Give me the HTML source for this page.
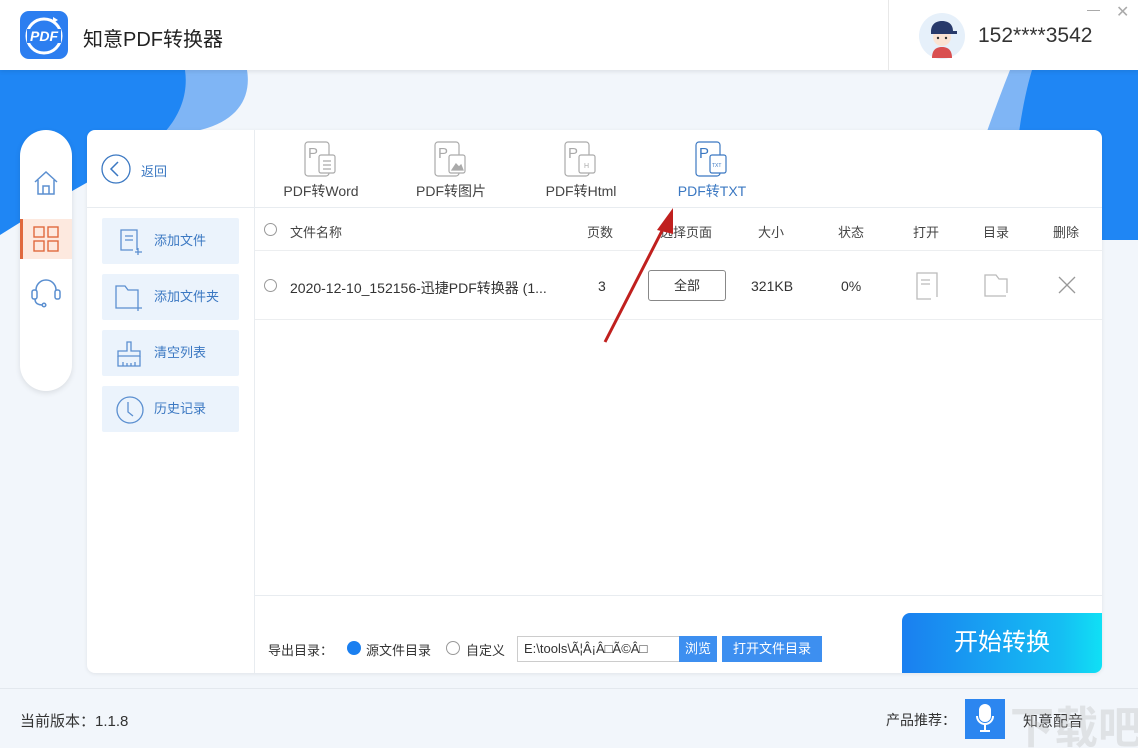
<!DOCTYPE html>
<html><head><meta charset="utf-8"><style>
*{margin:0;padding:0;box-sizing:border-box}
html,body{width:1138px;height:748px;overflow:hidden}
body{position:relative;background:#f2f6fb;font-family:"Liberation Sans","Noto Sans CJK SC",sans-serif;color:#333}
.a{position:absolute}
.hdr{left:0;top:0;width:1138px;height:70px;background:#fff;box-shadow:0 2px 4px rgba(0,0,0,.08);z-index:5}
.card{left:87px;top:130px;width:1015px;height:543px;background:#fff;border-radius:8px;box-shadow:0 1px 4px rgba(0,0,0,.08);overflow:hidden}
.side{left:20px;top:130px;width:52px;height:261px;background:#fff;border-radius:26px;box-shadow:0 2px 6px rgba(0,0,0,.1)}
.btn{left:15px;width:137px;height:46px;background:#ebf3fc;border-radius:2px;font-size:13px;color:#3b78c2;line-height:46px;padding-left:52px}
.tab{top:10px;width:120px;text-align:center;font-size:14px;color:#444}
.th{top:92px;font-size:13px;color:#444}
.td{top:148px;font-size:14px;color:#333}
</style></head><body>
<svg class="a" style="left:0;top:70px" width="1138" height="200">
<path d="M0 0H247C252 30 235 55 190 62C150 68 100 80 60 100L0 130Z" fill="#7fb5f5"/>
<path d="M0 0H185C190 35 170 70 120 95C80 115 40 140 0 165Z" fill="#1f86f4"/>
<path d="M1138 0V170H950C970 110 990 50 1010 0Z" fill="#7fb5f5"/>
<path d="M1138 0V170H1012C1012 100 1020 40 1032 0Z" fill="#1f86f4"/>
</svg>
<div class="a hdr">
 <svg class="a" style="left:20px;top:11px" width="48" height="48"><rect width="48" height="48" rx="9" fill="#2c7ef0"/><circle cx="24" cy="25" r="17" fill="none" stroke="#fff" stroke-width="3"/><rect x="7" y="18" width="34" height="14" fill="#2c7ef0"/><text x="24" y="30" font-size="14" font-weight="bold" font-style="italic" fill="#fff" text-anchor="middle" font-family="Liberation Sans">PDF</text><path d="M33 6l5 3-5 3z" fill="#fff"/></svg>
 <div class="a" style="left:83px;top:23px;font-size:20px;color:#222">知意PDF转换器</div>
 <div class="a" style="left:888px;top:0;width:1px;height:70px;background:#e8e8e8"></div>
 <svg class="a" style="left:918px;top:12px" width="48" height="48"><circle cx="24" cy="24" r="23" fill="#e6f0fa"/><path d="M14 46c0-8 4-11 10-11s10 3 10 11z" fill="#d94f50"/><circle cx="24" cy="25" r="9" fill="#fbe3d3"/><path d="M13 20c0-8 5-11 11-11s11 3 11 10h4v3H13z" fill="#283a6b"/><circle cx="20" cy="26" r="1.2" fill="#333"/><circle cx="28" cy="26" r="1.2" fill="#333"/></svg>
 <div class="a" style="left:978px;top:24px;font-size:21px;color:#333">152****3542</div>
 <div class="a" style="left:1087px;top:10px;width:13px;height:1px;background:#aaa"></div>
 <div class="a" style="left:1116px;top:2px;font-size:16px;color:#aaa">✕</div>
</div>
<div class="a side">
 <svg class="a" style="left:13px;top:40px" width="26" height="26"><path d="M2 12L13 2l11 10M5 10v14h16V10M10 24v-8h6v8" fill="none" stroke="#5b8fd0" stroke-width="1.5"/></svg>
 <div class="a" style="left:0;top:89px;width:52px;height:40px;background:#fde9df"></div>
 <div class="a" style="left:0;top:89px;width:3px;height:40px;background:#e0693e"></div>
 <svg class="a" style="left:13px;top:96px" width="26" height="26" fill="none" stroke="#e0693e" stroke-width="1.4"><rect x="1" y="1" width="10" height="10"/><rect x="15" y="1" width="10" height="10"/><rect x="1" y="15" width="10" height="10"/><rect x="15" y="15" width="10" height="10"/></svg>
 <svg class="a" style="left:10px;top:146px" width="32" height="32" fill="none" stroke="#5b8fd0" stroke-width="1.5"><path d="M6 14a10 10 0 0 1 20 0"/><rect x="2" y="14" width="5" height="9" rx="2"/><rect x="25" y="14" width="5" height="9" rx="2"/><path d="M5 23c0 4 3 6 8 6"/><circle cx="14" cy="29" r="1.8"/></svg>
</div>
<div class="a card">
 <div class="a" style="left:167px;top:0;width:1px;height:543px;background:#e8ecf0"></div>
 <div class="a" style="left:0;top:77px;width:1015px;height:1px;background:#e8ecf0"></div>
 <svg class="a" style="left:14px;top:24px" width="30" height="30"><circle cx="15" cy="15" r="14" fill="none" stroke="#3b78c2" stroke-width="1.3"/><path d="M17 8l-7 7 7 7" fill="none" stroke="#3b78c2" stroke-width="1.5"/></svg>
 <div class="a" style="left:54px;top:31px;font-size:13px;color:#3b78c2">返回</div>
 <div class="a btn" style="top:88px">添加文件<svg class="a" style="left:16px;top:10px" width="26" height="28" fill="none" stroke="#5b8fd0" stroke-width="1.3"><path d="M19 22V2H3v20h12"/><path d="M7 8h8M7 12h8M20 20v7M17 24h7"/></svg></div>
 <div class="a btn" style="top:144px">添加文件夹<svg class="a" style="left:12px;top:10px" width="30" height="28" fill="none" stroke="#5b8fd0" stroke-width="1.3"><path d="M21 24H2V2h9l3 4h10v14"/><path d="M24 20v7M21 24h7"/></svg></div>
 <div class="a btn" style="top:200px">清空列表<svg class="a" style="left:14px;top:10px" width="28" height="28" fill="none" stroke="#5b8fd0" stroke-width="1.3"><path d="M11 2h4v9h9v5H2v-5h9z"/><path d="M2 16v10h22V16M7 26v-4M11 26v-3M15 26v-3M19 26v-4"/></svg></div>
 <div class="a btn" style="top:256px">历史记录<svg class="a" style="left:13px;top:9px" width="30" height="30" fill="none" stroke="#5b8fd0" stroke-width="1.3"><circle cx="15" cy="15" r="13"/><path d="M13 7v10l5 4"/></svg></div>
 <div class="a" style="left:168px;top:0;width:847px;height:78px">
  <div class="a tab" style="left:6px"><svg width="36" height="38" fill="none" stroke="#aaa" stroke-width="1.2"><rect x="2" y="2" width="24" height="34" rx="3"/><text x="5" y="18" font-size="15" fill="#aaa" stroke="none">P</text><rect x="16" y="15" width="16" height="18" rx="2" fill="#fff"/><path d="M20 21h8M20 25h8M20 29h8"/></svg><div>PDF转Word</div></div>
  <div class="a tab" style="left:136px"><svg width="36" height="38" fill="none" stroke="#aaa" stroke-width="1.2"><rect x="2" y="2" width="24" height="34" rx="3"/><text x="5" y="18" font-size="15" fill="#aaa" stroke="none">P</text><rect x="16" y="15" width="16" height="18" rx="2" fill="#fff"/><path d="M19 30l4-6 3 3 2-2 2 5z" fill="#aaa"/></svg><div>PDF转图片</div></div>
  <div class="a tab" style="left:266px"><svg width="36" height="38" fill="none" stroke="#aaa" stroke-width="1.2"><rect x="2" y="2" width="24" height="34" rx="3"/><text x="5" y="18" font-size="15" fill="#aaa" stroke="none">P</text><rect x="16" y="15" width="16" height="18" rx="2" fill="#fff"/><text x="21" y="28" font-size="7" fill="#aaa" stroke="none">H</text></svg><div>PDF转Html</div></div>
  <div class="a tab" style="left:397px;color:#3b78c2"><svg width="36" height="38" fill="none" stroke="#3b78c2" stroke-width="1.2"><rect x="2" y="2" width="24" height="34" rx="3"/><text x="5" y="18" font-size="15" fill="#3b78c2" stroke="none">P</text><rect x="16" y="15" width="16" height="18" rx="2" fill="#fff"/><text x="18" y="27" font-size="5" fill="#3b78c2" stroke="none">TXT</text></svg><div>PDF转TXT</div></div>
 </div>
 <div class="a" style="left:168px;top:120px;width:847px;height:1px;background:#eceef0"></div>
 <div class="a" style="left:168px;top:189px;width:847px;height:1px;background:#eceef0"></div>
 <div class="a" style="left:177px;top:93px;width:13px;height:13px;border:1px solid #999;border-radius:50%"></div>
 <div class="a th" style="left:203px">文件名称</div>
 <div class="a th" style="left:500px">页数</div>
 <div class="a th" style="left:573px">选择页面</div>
 <div class="a th" style="left:671px">大小</div>
 <div class="a th" style="left:751px">状态</div>
 <div class="a th" style="left:826px">打开</div>
 <div class="a th" style="left:896px">目录</div>
 <div class="a th" style="left:966px">删除</div>
 <div class="a" style="left:177px;top:149px;width:13px;height:13px;border:1px solid #999;border-radius:50%"></div>
 <div class="a td" style="left:203px">2020-12-10_152156-迅捷PDF转换器 (1...</div>
 <div class="a td" style="left:511px">3</div>
 <div class="a" style="left:561px;top:140px;width:78px;height:31px;border:1px solid #888;border-radius:3px;text-align:center;line-height:29px;font-size:13px">全部</div>
 <div class="a td" style="left:664px">321KB</div>
 <div class="a td" style="left:754px">0%</div>
 <svg class="a" style="left:828px;top:141px" width="26" height="30" fill="none" stroke="#bbb" stroke-width="1.3"><path d="M22 26V2H2v26h14"/><path d="M6 9h9M6 13h9"/></svg>
 <svg class="a" style="left:896px;top:143px" width="28" height="26" fill="none" stroke="#bbb" stroke-width="1.3"><path d="M23 23H2V2h11l3 4h8v14"/></svg>
 <svg class="a" style="left:971px;top:146px" width="18" height="18" stroke="#999" stroke-width="1.3"><path d="M1 1l16 16M17 1L1 17"/></svg>
 <div class="a" style="left:168px;top:465px;width:847px;height:1px;background:#e8ecf0"></div>
 <div class="a" style="left:181px;top:510px;font-size:13px">导出目录：</div>
 <div class="a" style="left:260px;top:511px;width:14px;height:14px;background:#1a7ff0;border-radius:50%"></div>
 <div class="a" style="left:279px;top:510px;font-size:13px">源文件目录</div>
 <div class="a" style="left:359px;top:511px;width:14px;height:14px;border:1px solid #999;border-radius:50%"></div>
 <div class="a" style="left:379px;top:510px;font-size:13px">自定义</div>
 <div class="a" style="left:430px;top:506px;width:164px;height:26px;border:1px solid #ccc;font-size:13px;line-height:24px;padding-left:6px;white-space:nowrap;overflow:hidden">E:\tools\Ã¦Â¡Â□Ã©Â□</div>
 <div class="a" style="left:592px;top:506px;width:38px;height:26px;background:#3d8ff0;color:#fff;font-size:13px;line-height:26px;text-align:center">浏览</div>
 <div class="a" style="left:635px;top:506px;width:100px;height:26px;background:#3d8ff0;color:#fff;font-size:13px;line-height:26px;text-align:center">打开文件目录</div>
 <div class="a" style="left:815px;top:483px;width:200px;height:60px;background:linear-gradient(90deg,#1a7ff0,#15bff3 80%,#10e0f5);border-radius:8px 0 0 0;color:#fff;font-size:24px;line-height:60px;text-align:center">开始转换</div>
</div>
<div class="a" style="left:0;top:688px;width:1138px;height:1px;background:#e3e8ee"></div>
<div class="a" style="left:20px;top:710px;font-size:15px;color:#333">当前版本：1.1.8</div>
<div class="a" style="left:886px;top:710px;font-size:14px;color:#333">产品推荐：</div>
<div class="a" style="left:965px;top:699px;width:40px;height:40px;background:#2c86f0"></div>
<svg class="a" style="left:975px;top:703px" width="20" height="32" fill="none" stroke="#fff" stroke-width="2"><rect x="5" y="2" width="10" height="16" rx="5" fill="#fff"/><path d="M2 13a8 8 0 0 0 16 0M10 21v6M5 28h10"/></svg>
<div class="a" style="left:1023px;top:710px;font-size:15px;color:#333">知意配音</div>
<div class="a" style="left:1010px;top:692px;font-size:44px;color:rgba(190,190,190,.35);font-weight:bold;white-space:nowrap">下载吧</div>
<svg class="a" style="left:595px;top:200px" width="90" height="150"><line x1="10" y1="142" x2="70" y2="25" stroke="#c0201e" stroke-width="3"/><path d="M78 8L62 30l16 4z" fill="#c0201e"/></svg>
</body></html>
